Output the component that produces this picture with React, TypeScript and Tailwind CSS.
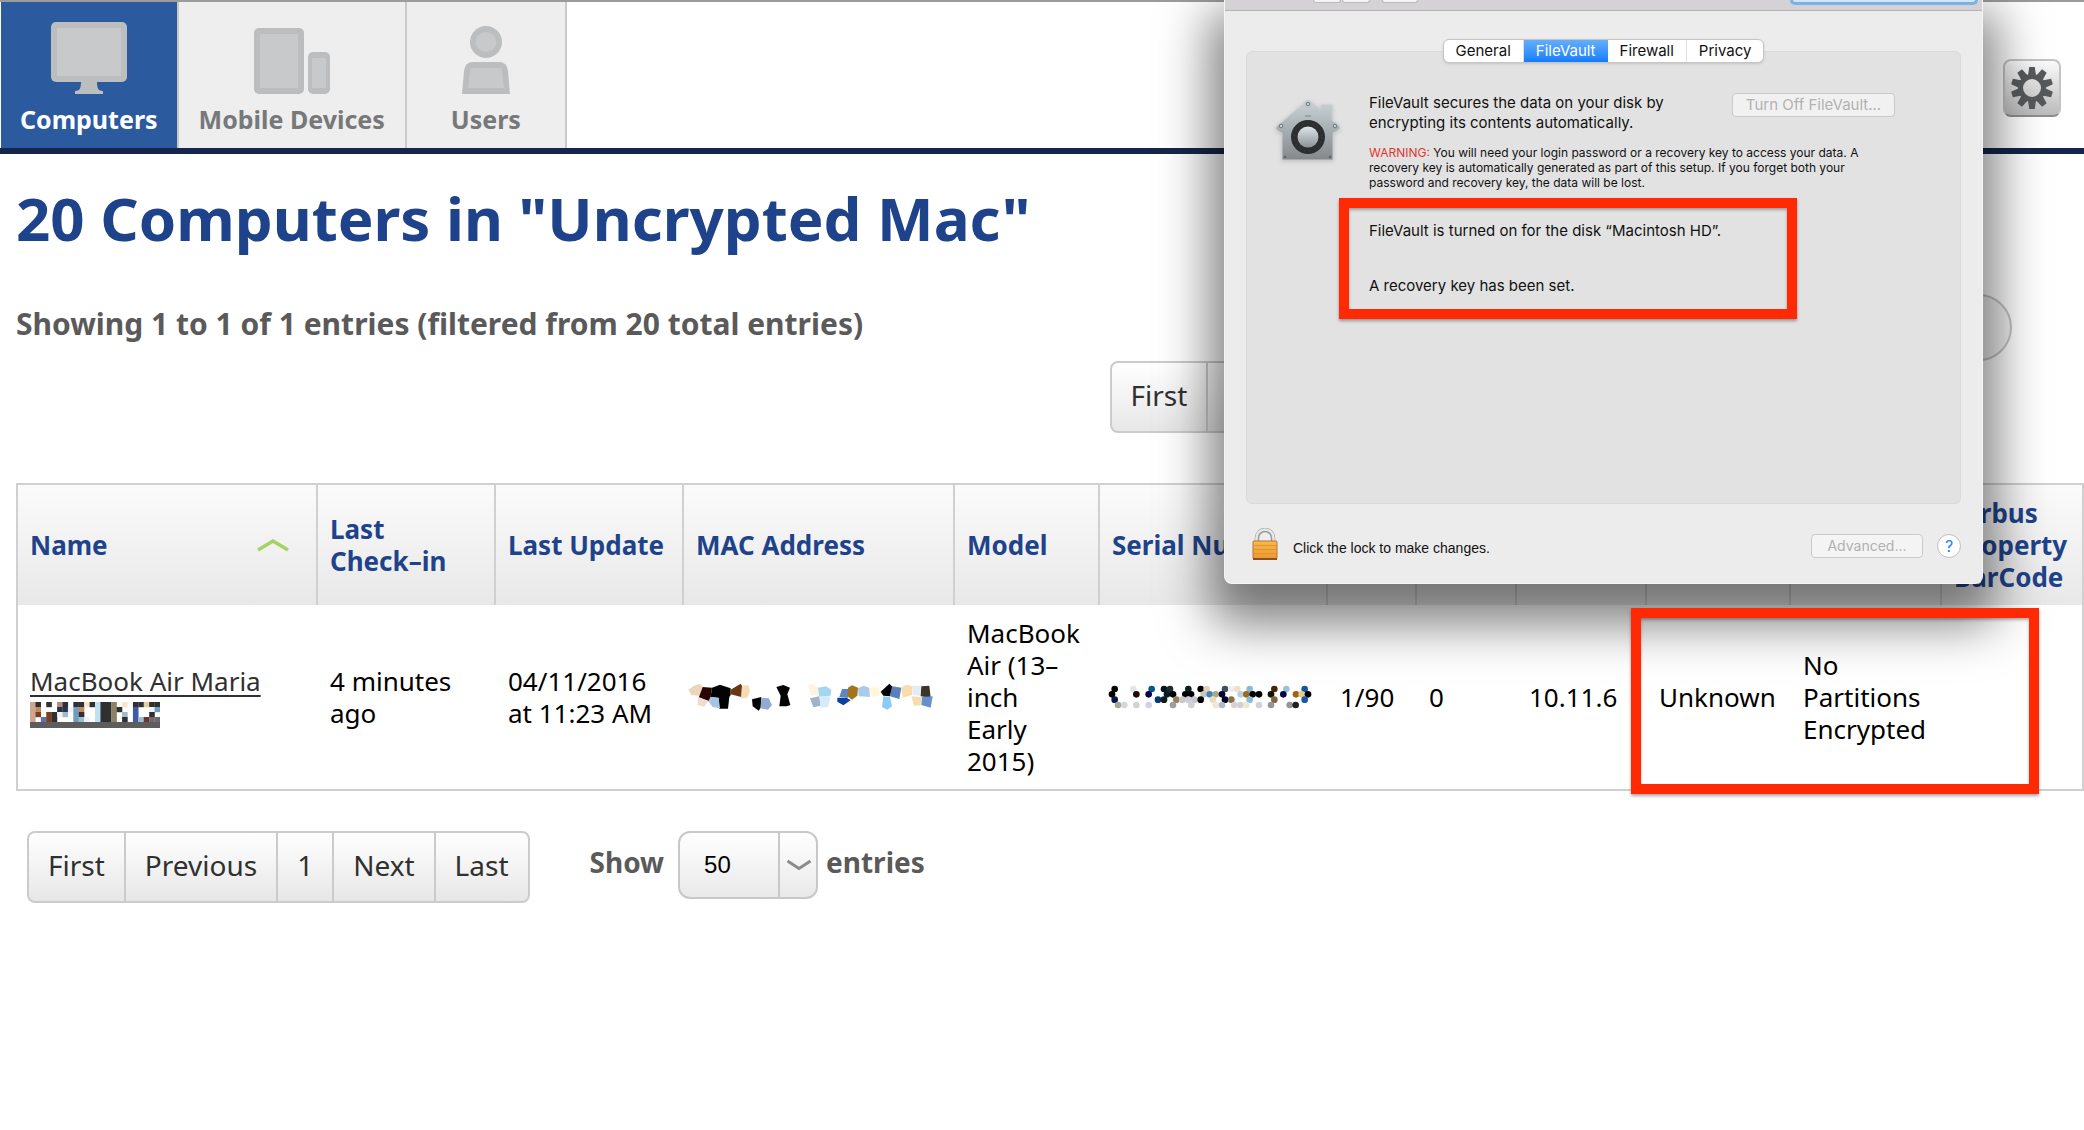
import type { ReactNode } from 'react';

/* One row of squares per string entry; "." leaves the square empty. */
const nameMosaic: Record<string, string> = {
  t: '#cfa58f', k: '#303032', n: '#27315c', b: '#6f9dbb', l: '#bfe0f3', g: '#8d8266', c: '#f6e6cf',
  o: '#c08a5e', r: '#7c3f22', v: '#3f5aa8', w: '#eef2f8', p: '#b08a86', y: '#6e6a6c', h: '#e8cf9a', s: '#a0bccb', d: '#6b3434', m: '#5c74a8',
};
const nameRows = ['tk.k.pk.kkcklkkg.c.kkhkk', 'to...knwbo..lkkgk..v..wb', 'tr.rkws.bk..lkkg.s.v..k.', 't.mrk...bsw.lkkg.k.vsdyy'];

function NameRedaction() {
  return (
    <svg width="130" height="26" viewBox="0 0 130 26" preserveAspectRatio="none" className="block" role="img" aria-label="Redacted name">
      {nameRows.map((row, y) =>
        row.split('').map((c, x) =>
          c === '.' ? null : <rect key={`${x}-${y}`} x={x * 5.417} y={y * 5} width="5.6" height="5.2" fill={nameMosaic[c]} />,
        ),
      )}
      <rect y="20" width="130" height="6" fill="#5d5d5e" />
    </svg>
  );
}

const shards: [string, string][] = [
  ['27,66 44,54 62,48 70,58 60,84 36,82', '#ecd5b8'],
  ['70,58 98,60 94,88 88,100 58,90', '#2a0505'],
  ['58,88 88,100 74,117 54,112', '#eddccf'],
  ['98,60 122,51 154,62 154,82 150,88 146,123 120,123 118,90 94,88', '#030303'],
  ['94,88 118,92 122,122 100,118 88,102', '#a3c4e4'],
  ['154,66 184,48 188,54 186,88 154,80', '#6b3613'],
  ['188,54 207,52 212,70 204,90 186,92', '#f6dcb4'],
  ['218,95 246,88 244,120 238,129 220,116', '#050505'],
  ['246,90 268,92 278,112 266,126 244,122', '#94aad2'],
  ['291,58 312,52 332,60 324,80 333,112 322,116 300,116 304,84', '#050505'],
  ['386,54 396,48 416,60 418,84 394,82', '#fdf3e2'],
  ['416,60 440,56 456,66 454,84 420,88', '#a4d6f2'],
  ['392,92 420,86 424,114 402,119', '#9fb4c8'],
  ['420,86 454,86 446,118 424,120', '#d3ebfb'],
  ['488,64 506,64 506,90 480,88', '#5c85c2'],
  ['474,90 502,90 514,98 492,113 474,102', '#0b429d'],
  ['506,60 518,53 536,60 534,84 518,96 504,86', '#a2751c'],
  ['536,62 552,54 570,60 572,88 538,86', '#a8cbec'],
  ['570,64 582,56 600,62 600,84 576,88', '#fff6dc'],
  ['604,72 630,48 640,58 632,86 612,84', '#050505'],
  ['638,56 666,60 660,94 632,86', '#5980b8'],
  ['612,86 632,88 638,116 624,126 608,118', '#8accf6'],
  ['666,60 680,51 698,56 698,82 670,90', '#f8dcb0'],
  ['698,54 726,54 724,84 700,82', '#e6ecf6'],
  ['726,56 750,54 754,90 724,86', '#3b3529'],
  ['696,86 726,88 724,113 704,114', '#f6dcae'],
  ['728,88 760,86 754,120 726,112', '#6690ca'],
];

function MacRedaction() {
  return (
    <svg width="246" height="28" viewBox="26 46 738 84" className="block" role="img" aria-label="Redacted address">
      {shards.map(([points, fill]) => (
        <polygon key={points} points={points} fill={fill} />
      ))}
    </svg>
  );
}

/* x, row, colour */
const dots: [number, number, string][] = [
  [46, 0, '#000'], [102, 0, '#e2e6ea'], [157, 0, '#0a5494'], [194, 0, '#06141e'], [212, 0, '#1c2a32'], [267, 0, '#06201c'],
  [304, 0, '#000'], [322, 0, '#ecd2b4'], [377, 0, '#3c5060'], [396, 0, '#eeeeee'], [414, 0, '#f4e0be'], [451, 0, '#88bad4'],
  [525, 0, '#4c2406'], [561, 0, '#98c2dc'], [598, 0, '#f6f8fa'], [616, 0, '#1456a0'],
  [38, 1, '#000'], [111, 1, '#2c0404'], [148, 1, '#04044c'], [203, 1, '#051a24'], [221, 1, '#000'], [258, 1, '#000'], [275, 1, '#000'],
  [313, 1, '#c6c6c2'], [331, 1, '#4088bc'], [349, 1, '#b0a488'], [368, 1, '#04042c'], [424, 1, '#b4d0e8'], [441, 1, '#a06a1a'],
  [460, 1, '#000'], [479, 1, '#000'], [515, 1, '#0c1404'], [552, 1, '#04044c'], [590, 1, '#a0620e'], [607, 1, '#e8cc8e'], [626, 1, '#000'],
  [46, 2, '#06184c'], [176, 2, '#043878'], [194, 2, '#0c1c1c'], [231, 2, '#96825e'], [249, 2, '#c8c8cc'], [267, 2, '#cccdd8'], [285, 2, '#c4c6d4'],
  [304, 2, '#000'], [341, 2, '#ecdab8'], [377, 2, '#040824'], [396, 2, '#8a7050'], [451, 2, '#88bcd8'], [525, 2, '#806444'], [616, 2, '#1858a2'],
  [56, 3, '#a8a698'], [75, 3, '#d4d6d8'], [111, 3, '#d2d2d4'], [148, 3, '#d2d0e4'], [221, 3, '#a09e98'], [276, 3, '#d2d2d4'],
  [349, 3, '#f0e6dc'], [368, 3, '#b2b8cc'], [405, 3, '#d4d4d6'], [423, 3, '#d2d2d6'], [441, 3, '#f0e6d4'], [479, 3, '#d0d2d4'],
  [515, 3, '#949698'], [571, 3, '#94969a'], [589, 3, '#1e2424'],
];

function SerialRedaction() {
  return (
    <svg width="204" height="24" viewBox="26 1045 612 72" className="block" role="img" aria-label="Redacted serial">
      {dots.map(([x, row, fill]) => (
        <circle key={`${x}-${row}`} cx={x} cy={1057 + row * 16} r="10" fill={fill} />
      ))}
    </svg>
  );
}

function ComputerIcon() {
  return (
    <svg width="76" height="74" viewBox="0 0 76 74" className="block">
      <path d="M30 59h16c0 7 1 10 6 10v3H24v-3c5 0 6-3 6-10z" fill="#bbbdbf" />
      <rect width="76" height="60" rx="5" fill="#bbbdbf" />
      <rect x="6" y="6" width="64" height="48" fill="#c7c9cb" />
    </svg>
  );
}

function DevicesIcon() {
  return (
    <svg width="76" height="74" viewBox="0 0 76 74" className="block">
      <rect y="6" width="50" height="66" rx="5" fill="#bbbdbf" />
      <rect x="6" y="12" width="38" height="54" fill="#c7c9cb" />
      <rect x="54" y="30" width="22" height="42" rx="5" fill="#bbbdbf" />
      <rect x="58" y="36" width="14" height="30" fill="#c7c9cb" />
    </svg>
  );
}

function UserIcon() {
  return (
    <svg width="48" height="74" viewBox="0 0 48 74" className="block">
      <ellipse cx="24" cy="20" rx="16" ry="16" fill="#bbbdbf" />
      <ellipse cx="24" cy="20" rx="10.500" ry="10" fill="#c7c9cb" />
      <path d="M11 40h26q8 0 9 9l2 23H0l2-23q1-9 9-9z" fill="#bbbdbf" />
      <path d="M10 46h28q2 0 2 3l2 17H6l2-17q0-3 2-3z" fill="#c7c9cb" />
    </svg>
  );
}

function GearIcon() {
  return (
    <svg width="42" height="42" viewBox="-21 -21 42 42">
      {Array.from({ length: 10 }, (_, i) => (
        <path key={i} d="M-4-12L-2.800-21H2.800L4-12z" fill="#58595b" transform={`rotate(${i * 36})`} />
      ))}
      <circle r="11.500" fill="none" stroke="#58595b" strokeWidth="5" />
    </svg>
  );
}

function VaultIcon() {
  return (
    <svg width="66" height="64" viewBox="0 0 66 64" className="block drop-shadow-sm">
      <defs>
        <linearGradient id="house" x1="0" y1="0" x2="0" y2="1">
          <stop offset="0" stopColor="#cbd3d6" />
          <stop offset=".5" stopColor="#a5afb2" />
          <stop offset="1" stopColor="#85888a" />
        </linearGradient>
        <linearGradient id="knob" x1="0" y1="0" x2="0" y2="1">
          <stop offset="0" stopColor="#dde5e8" />
          <stop offset="1" stopColor="#8c9396" />
        </linearGradient>
      </defs>
      <path d="M33 1L46 11V6h11v15l8 7q0 3-7 6v27H7V34q-7-3-6-6z" fill="url(#house)" stroke="#c9cdce" strokeWidth="1" />
      <g fill="#c5cfd2" stroke="#6d7679" strokeWidth="1">
        <circle cx="33" cy="5" r="1.800" />
        <circle cx="6" cy="27" r="1.800" />
        <circle cx="60" cy="27" r="1.800" />
      </g>
      <g fill="#5f6264">
        <circle cx="10" cy="58" r="1.300" />
        <circle cx="55" cy="58" r="1.300" />
      </g>
      <path d="M30 17h6" stroke="#7d878a" strokeWidth="1" />
      <circle cx="33" cy="38" r="17" fill="#2c2e30" />
      <circle cx="33" cy="38" r="14" fill="none" stroke="#383b3d" strokeWidth="2" strokeDasharray="1 4" />
      <circle cx="33" cy="38" r="10.500" fill="url(#knob)" />
    </svg>
  );
}

function LockIcon() {
  return (
    <svg width="26" height="32" viewBox="0 0 26 32" className="block">
      <defs>
        <linearGradient id="brass" x1="0" y1="0" x2="0" y2="1">
          <stop offset="0" stopColor="#f9b850" />
          <stop offset="1" stopColor="#eb992e" />
        </linearGradient>
      </defs>
      <path d="M5 15V10a8 8 0 0 1 16 0v5" fill="none" stroke="#9b9b9b" strokeWidth="4.500" />
      <path d="M4.500 15V10a8.500 8.500 0 0 1 17 0v5" fill="none" stroke="#e6e6e6" strokeWidth="2.500" />
      <rect x="1" y="13" width="24" height="18" rx="1" fill="url(#brass)" stroke="#b8742f" strokeWidth="1" />
      <path d="M2 17.500h22M2 21.500h22M2 25.500h22" stroke="#e0942f" strokeWidth="1" />
      <path d="M1 31h24" stroke="#8c4d28" strokeWidth="2" />
    </svg>
  );
}

function NavTab({ label, active, pad = 'px-5', children }: { label: string; active?: boolean; pad?: string; children: ReactNode }) {
  return (
    <a
      href="#"
      aria-current={active ? 'page' : undefined}
      className={`flex h-[146px] flex-col items-center border-r-2 border-[#c9c9c9] pt-5 text-[25px] font-bold leading-[34px] ${pad} ${
        active ? 'bg-[#2b5a9e] text-white' : 'bg-[#eee] text-[#77787a]'
      }`}
    >
      {children}
      <span className="mt-[6px]">{label}</span>
    </a>
  );
}

function Pager({ items }: { items: string[] }) {
  return (
    <div className="inline-flex h-[72px] divide-x-2 divide-[#cbcbcb] overflow-hidden rounded-lg border-2 border-[#cbcbcb] bg-gradient-to-b from-white to-[#e7e7e7] text-[28px] text-[#303030]">
      {items.map((item) => (
        <button key={item} type="button" className="px-[19px] pb-1">
          {item}
        </button>
      ))}
    </div>
  );
}

const columns: { label: ReactNode; width: string }[] = [
  { label: 'Name', width: 'w-[300px]' },
  { label: <>Last<br />Check–in</>, width: 'w-[178px]' },
  { label: 'Last Update', width: 'w-[188px]' },
  { label: 'MAC Address', width: 'w-[271px]' },
  { label: 'Model', width: 'w-[145px]' },
  { label: 'Serial Number', width: 'w-[228px]' },
  { label: '', width: 'w-[89px]' },
  { label: '', width: 'w-[100px]' },
  { label: '', width: 'w-[130px]' },
  { label: '', width: 'w-[144px]' },
  { label: '', width: 'w-[151px]' },
  { label: <>Airbus<br />Property<br />BarCode</>, width: '' },
];

function ComputersTable() {
  return (
    <table className="w-full table-fixed border-separate border-spacing-0 border-2 border-[#d0d0d0] text-left text-[26px] leading-8 text-black">
      <colgroup>
        {columns.map((c, i) => (
          <col key={i} className={c.width} />
        ))}
      </colgroup>
      <thead>
        <tr className="h-[120px] bg-gradient-to-b from-[#fbfbfb] to-[#e8e8e8] text-[#1f438b]">
          {columns.map((c, i) => (
            <th key={i} scope="col" className="whitespace-nowrap border-r-2 border-[#d0d0d0] px-3 font-bold last:border-r-0">
              {i === 0 ? (
                <span className="flex items-center justify-between pr-[14px]">
                  {c.label}
                  <svg width="34" height="14" viewBox="0 0 34 14">
                    <path d="M2 12L17 3L32 12" fill="none" stroke="#a4d364" strokeWidth="3.500" />
                  </svg>
                </span>
              ) : (
                c.label
              )}
            </th>
          ))}
        </tr>
      </thead>
      <tbody>
        <tr className="h-[184px]">
          <td className="px-3">
            <a href="#" className="block whitespace-nowrap text-[#303030] underline underline-offset-4">
              MacBook Air Maria
            </a>
            <span className="flex h-8 items-end pb-px">
              <NameRedaction />
            </span>
          </td>
          <td className="px-3">
            4 minutes
            <br />
            ago
          </td>
          <td className="whitespace-nowrap px-3">
            04/11/2016
            <br />
            at 11:23 AM
          </td>
          <td className="px-1">
            <MacRedaction />
          </td>
          <td className="whitespace-nowrap px-3">
            MacBook
            <br />
            Air (13–
            <br />
            inch
            <br />
            Early
            <br />
            2015)
          </td>
          <td className="px-2">
            <SerialRedaction />
          </td>
          <td className="px-3">1/90</td>
          <td className="px-3">0</td>
          <td className="px-3">10.11.6</td>
          <td className="px-3">Unknown</td>
          <td className="px-3">
            No
            <br />
            Partitions
            <br />
            Encrypted
          </td>
          <td />
        </tr>
      </tbody>
    </table>
  );
}

function FileVaultWindow() {
  const tab = 'border-r border-[#e0e0e0] px-3 last:border-r-0';
  return (
    <section
      aria-label="Security and Privacy"
      className="absolute left-[1224px] top-0 h-[584px] w-[759px] rounded-b-lg border border-t-0 border-[#f6f6f6] bg-[#ececec] font-[Inter,sans-serif] text-[15px] text-[#111] shadow-[0_26px_50px_14px_rgba(0,0,0,0.5)]"
    >
      <div className="flex h-[11px] items-start border-b border-[#b4b2b4] bg-[#d4d2d4] pl-[88px] pr-1">
        <div className="h-[3px] w-7 rounded-b-sm border border-t-0 border-[#bbb] bg-[#f4f4f4]" />
        <div className="ml-px h-[3px] w-7 rounded-b-sm border border-t-0 border-[#bbb] bg-[#f4f4f4]" />
        <div className="ml-3 h-[3px] w-9 rounded-b-sm border border-t-0 border-[#bbb] bg-[#f4f4f4]" />
        <div className="ml-auto h-[5px] w-[188px] rounded-b-md border-[3px] border-t-0 border-[#7fb0e2] bg-[#cfe6fa]" />
      </div>

      <div className="px-[21px] pt-10">
        <div className="h-[453px] rounded-md border border-[#dadada] bg-[#e2e2e2]">
          <div className="mx-auto -mt-[13px] flex h-6 w-fit overflow-hidden rounded-md border border-[#c4c4c4] bg-white leading-[22px] shadow-sm">
            <button type="button" className={tab}>General</button>
            <button type="button" className="bg-gradient-to-b from-[#62aefc] to-[#0f7dfb] px-3 text-white">FileVault</button>
            <button type="button" className={tab}>Firewall</button>
            <button type="button" className={tab}>Privacy</button>
          </div>

          <div className="flex pl-7 pt-[30px]">
            <div className="pt-[6px]">
              <VaultIcon />
            </div>
            <div className="ml-7">
              <div className="flex justify-between">
                <p className="w-[320px] whitespace-nowrap leading-5">
                  FileVault secures the data on your disk by
                  <br />
                  encrypting its contents automatically.
                </p>
                <button
                  type="button"
                  disabled
                  className="ml-[43px] h-6 w-[163px] rounded border border-[#c9c9c9] bg-[#f1f1f1] leading-[22px] text-[#b2b2b2]"
                >
                  Turn Off FileVault...
                </button>
              </div>
              <p className="mt-3 whitespace-nowrap text-xs leading-[15px]">
                <span className="text-[#e2362e]">WARNING:</span> You will need your login password or a recovery key to access your data. A
                <br />
                recovery key is automatically generated as part of this setup. If you forget both your
                <br />
                password and recovery key, the data will be lost.
              </p>
              <div className="-ml-[30px] mt-2 h-[121px] w-[458px] border-[10px] border-[#ff2a04] pl-5 pt-[13px] leading-5 shadow-[0_2px_3px_rgba(0,0,0,0.35),inset_0_2px_3px_rgba(0,0,0,0.3)]">
                <p>FileVault is turned on for the disk “Macintosh HD”.</p>
                <p className="mt-[35px]">A recovery key has been set.</p>
              </div>
            </div>
          </div>
        </div>
      </div>

      <div className="flex items-center pl-[27px] pr-[21px] pt-6">
        <LockIcon />
        <p className="ml-[15px] mt-2 font-['Liberation_Sans',sans-serif] text-sm">Click the lock to make changes.</p>
        <button
          type="button"
          disabled
          className="ml-auto mt-1 h-6 w-28 rounded border border-[#cacaca] bg-[#f4f4f4] text-sm leading-[22px] text-[#b0b0b0]"
        >
          Advanced...
        </button>
        <button type="button" aria-label="Help" className="ml-[14px] mt-1 size-6 rounded-full border border-[#bfbfbf] bg-white text-base leading-[22px] text-[#1482fa]">
          ?
        </button>
      </div>
    </section>
  );
}

export default function App() {
  return (
    <div className="relative min-h-screen overflow-hidden bg-white font-['Noto_Sans',sans-serif]">
      <header className="flex items-center justify-between border-b-[6px] border-t-2 border-b-[#15264a] border-t-[#9b9b9b] pl-px">
        <nav className="flex">
          <NavTab label="Computers" active pad="px-[19px]">
            <ComputerIcon />
          </NavTab>
          <NavTab label="Mobile Devices">
            <DevicesIcon />
          </NavTab>
          <NavTab label="Users" pad="px-11">
            <UserIcon />
          </NavTab>
        </nav>
        <button
          type="button"
          aria-label="Settings"
          className="mr-[23px] mt-[26px] flex size-[58px] items-center justify-center rounded-lg border-2 border-[#c4c4c4] border-b-[#8e8e8e] bg-gradient-to-b from-[#fbfbfb] to-[#bcbcbc]"
        >
          <GearIcon />
        </button>
      </header>

      <main className="pl-4">
        <h1 className="pt-6 text-[60px] font-bold leading-[80px] text-[#1f438b]">20 Computers in "Uncrypted Mac"</h1>
        <div className="mt-9 flex h-[67px] items-center justify-between pr-[72px]">
          <p className="pb-2 text-[30px] font-bold text-[#5a5a5b]">Showing 1 to 1 of 1 entries (filtered from 20 total entries)</p>
          <input aria-label="Filter results" className="h-full w-[400px] rounded-full border-2 border-[#c6c6c6] bg-[#f2f2f2] px-8" />
        </div>
        <div className="flex justify-end pr-[472px]">
          <Pager items={['First', 'Previous', '1', 'Next', 'Last']} />
        </div>
        <div className="mt-[50px]">
          <ComputersTable />
        </div>
        <div className="ml-[11px] mt-10 flex items-start text-[28px]">
          <Pager items={['First', 'Previous', '1', 'Next', 'Last']} />
          <label htmlFor="page-size" className="ml-[60px] font-bold leading-[62px] text-[#5a5a5b]">
            Show
          </label>
          <div className="relative ml-[14px]">
            <select
              id="page-size"
              defaultValue="50"
              className="h-[68px] w-[140px] appearance-none rounded-xl border-2 border-[#c8c8c8] bg-gradient-to-b from-white to-[#e9e9e9] pl-6 font-['Liberation_Sans',sans-serif] text-2xl text-black"
            >
              <option>50</option>
            </select>
            <span className="pointer-events-none absolute inset-y-0 right-0 flex w-10 items-center justify-center border-l-2 border-[#c8c8c8]">
              <svg width="26" height="12" viewBox="0 0 26 12">
                <path d="M1.500 2L13 9.500L24.500 2" fill="none" stroke="#8b8b8b" strokeWidth="3" />
              </svg>
            </span>
          </div>
          <span className="ml-2 font-bold leading-[62px] text-[#5a5a5b]">entries</span>
        </div>
      </main>

      <FileVaultWindow />
      <div
        aria-hidden="true"
        className="pointer-events-none absolute left-[1631px] top-[608px] h-[186px] w-[408px] border-[10px] border-[#ff2a04] shadow-[0_2px_3px_rgba(0,0,0,0.35),inset_0_2px_3px_rgba(0,0,0,0.3)]"
      />
    </div>
  );
}
